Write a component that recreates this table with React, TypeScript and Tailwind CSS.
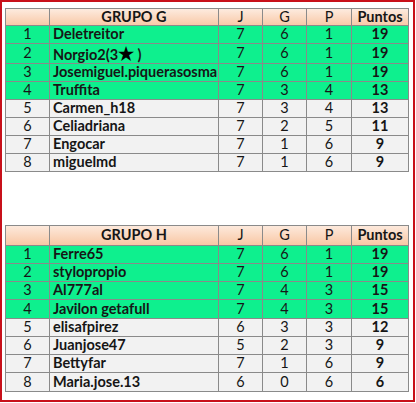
import React from 'react';

type Fila = { pos: number; nombre: React.ReactNode; j: number; g: number; p: number; puntos: number; verde: boolean };

const grupoG: Fila[] = [
  { pos: 1, nombre: 'Deletreitor', j: 7, g: 6, p: 1, puntos: 19, verde: true },
  {
    pos: 2,
    nombre: (
      <>
        Norgio2(3<span className="text-[18px] leading-none text-black">★</span> )
      </>
    ),
    j: 7, g: 6, p: 1, puntos: 19, verde: true,
  },
  { pos: 3, nombre: 'Josemiguel.piquerasosma', j: 7, g: 6, p: 1, puntos: 19, verde: true },
  { pos: 4, nombre: 'Truffita', j: 7, g: 3, p: 4, puntos: 13, verde: true },
  { pos: 5, nombre: 'Carmen_h18', j: 7, g: 3, p: 4, puntos: 13, verde: false },
  { pos: 6, nombre: 'Celiadriana', j: 7, g: 2, p: 5, puntos: 11, verde: false },
  { pos: 7, nombre: 'Engocar', j: 7, g: 1, p: 6, puntos: 9, verde: false },
  { pos: 8, nombre: 'miguelmd', j: 7, g: 1, p: 6, puntos: 9, verde: false },
];

const grupoH: Fila[] = [
  { pos: 1, nombre: 'Ferre65', j: 7, g: 6, p: 1, puntos: 19, verde: true },
  { pos: 2, nombre: 'stylopropio', j: 7, g: 6, p: 1, puntos: 19, verde: true },
  { pos: 3, nombre: 'Al777al', j: 7, g: 4, p: 3, puntos: 15, verde: true },
  { pos: 4, nombre: 'Javilon getafull', j: 7, g: 4, p: 3, puntos: 15, verde: true },
  { pos: 5, nombre: 'elisafpirez', j: 6, g: 3, p: 3, puntos: 12, verde: false },
  { pos: 6, nombre: 'Juanjose47', j: 5, g: 2, p: 3, puntos: 9, verde: false },
  { pos: 7, nombre: 'Bettyfar', j: 7, g: 1, p: 6, puntos: 9, verde: false },
  { pos: 8, nombre: 'Maria.jose.13', j: 6, g: 0, p: 6, puntos: 6, verde: false },
];

const celda = 'border border-[#8a8a8a] p-0';

function TablaGrupo({ titulo, filas, cabecera, fila }: { titulo: string; filas: Fila[]; cabecera: string; fila: string }) {
  return (
    <table className="w-[403px] border-collapse table-fixed text-[14.5px] text-[#161616]">
      <colgroup>
        <col className="w-[44px]" />
        <col className="w-[169px]" />
        <col className="w-[44px]" />
        <col className="w-[44px]" />
        <col className="w-[45px]" />
        <col className="w-[57px]" />
      </colgroup>
      <thead>
        <tr className={`${cabecera} bg-gradient-to-b from-[#fdebdf] to-[#f8c7a4]`}>
          <th className={celda}></th>
          <th className={`${celda} text-center font-bold`}>{titulo}</th>
          <th className={`${celda} text-center font-normal`}>J</th>
          <th className={`${celda} text-center font-normal`}>G</th>
          <th className={`${celda} text-center font-normal`}>P</th>
          <th className={`${celda} text-center font-bold`}>Puntos</th>
        </tr>
      </thead>
      <tbody>
        {filas.map(f => (
          <tr key={f.pos} className={`${fila} ${f.verde ? 'bg-[#0ef08e]' : 'bg-[#f2f2f2]'}`}>
            <td className={`${celda} text-center`}>{f.pos}</td>
            <td className={`${celda} pl-[3px] font-bold whitespace-nowrap`}>{f.nombre}</td>
            <td className={`${celda} text-center`}>{f.j}</td>
            <td className={`${celda} text-center`}>{f.g}</td>
            <td className={`${celda} text-center`}>{f.p}</td>
            <td className={`${celda} text-center font-bold`}>{f.puntos}</td>
          </tr>
        ))}
      </tbody>
    </table>
  );
}

export default function App() {
  return (
    <div className="w-[416px] h-[403px] bg-white" style={{ fontFamily: 'Lato, "Open Sans", sans-serif' }}>
      <div className="w-[415px] h-[402px] border-2 border-[#c8101a] pl-[3px] pt-[6px] leading-none">
        <TablaGrupo titulo="GRUPO G" filas={grupoG} cabecera="h-[17px]" fila="h-[18px]" />
        <div className="h-[53px]" />
        <TablaGrupo titulo="GRUPO H" filas={grupoH} cabecera="h-[20px]" fila="h-[18.25px]" />
      </div>
    </div>
  );
}
